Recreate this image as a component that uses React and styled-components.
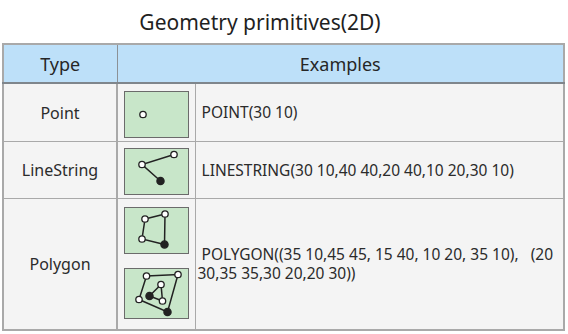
import styled, { createGlobalStyle } from 'styled-components'

const GlobalStyle = createGlobalStyle`
  html, body {
    margin: 0;
    padding: 0;
    background: #ffffff;
  }
  body {
    font-family: "Noto Sans", "Open Sans", "DejaVu Sans", sans-serif;
    color: #262626;
  }
`;

const Page = styled.div`
  width: 568px;
  height: 334px;
  overflow: hidden;
`;

const Title = styled.h1`
  margin: 0;
  width: 520px;
  height: 43px;
  line-height: 44px;
  text-align: center;
  font-size: 21px;
  font-weight: 400;
  color: #1f1f1f;
`;

const Table = styled.table`
  margin-left: 2px;
  width: 563px;
  border-collapse: collapse;
  table-layout: fixed;
  border: 2px solid #a9a9a9;
  background: #f4f4f4;
`;

const HeadCell = styled.th`
  height: 37px;
  padding: 0;
  background: #bde0f9;
  border: 1px solid #8c9196;
  border-bottom: 2px solid #7f868c;
  font-size: 18px;
  font-weight: 400;
  color: #262626;
  text-align: center;
`;

const TypeCell = styled.td`
  height: ${({ $h }) => $h}px;
  padding: 0;
  border: 1px solid #a9a9a9;
  border-right: 2px solid #a9a9a9;
  text-align: center;
  font-size: 16px;
  color: #2b2b2b;
`;

const PicCell = styled.td`
  padding: 0;
  border: 1px solid #a9a9a9;
  vertical-align: middle;
`;

const PicStack = styled.div`
  display: flex;
  flex-direction: column;
  align-items: center;
  gap: 14px;
  padding: ${({ $pad }) => $pad || '0'};
`;

const TextCell = styled.td`
  padding: 0 3px 0 2px;
  border: 1px solid #a9a9a9;
  font-size: 15.5px;
  line-height: 19px;
  color: #2b2b2b;
  white-space: pre-wrap;
  text-align: left;
`;

const Box = styled.svg`
  display: block;
  margin-left: 1px;
`;

const NODE = { r: 3.2, stroke: '#222', strokeWidth: 1.3 };

const Node = ({ x, y, filled }) => (
  <circle cx={x} cy={y} r={filled ? 3.6 : NODE.r} fill={filled ? '#222' : '#fff'} stroke={NODE.stroke} strokeWidth={NODE.strokeWidth} />
);

const Frame = ({ h, children }) => (
  <Box width="65" height={h} viewBox={`0 0 65 ${h}`}>
    <rect x="0.5" y="0.5" width="64" height={h - 1} fill="#c8e6c9" stroke="#6b6b6b" strokeWidth="1" />
    {children}
  </Box>
);

const PointIcon = () => (
  <Frame h={47}>
    <Node x={19} y={23.5} />
  </Frame>
);

const LineIcon = () => (
  <Frame h={47}>
    <polyline points="50,6.5 18,16.5 36.5,33" fill="none" stroke="#222" strokeWidth="1.5" />
    <Node x={50} y={6.5} />
    <Node x={18} y={16.5} />
    <Node x={36.5} y={33} filled />
  </Frame>
);

const PolyIcon = () => (
  <Frame h={47}>
    <polygon points="21,12 41,7 40.5,37.5 18,32" fill="none" stroke="#222" strokeWidth="1.5" />
    <Node x={21} y={12} />
    <Node x={41} y={7} />
    <Node x={18} y={32} />
    <Node x={40.5} y={37.5} filled />
  </Frame>
);

const HoleIcon = () => (
  <Frame h={51}>
    <polygon points="22.5,8 54,6.5 43.5,44 15,31.5" fill="none" stroke="#222" strokeWidth="1.5" />
    <polygon points="37,16.5 25.5,28 38.5,33" fill="none" stroke="#222" strokeWidth="1.5" />
    <Node x={22.5} y={8} />
    <Node x={54} y={6.5} />
    <Node x={15} y={31.5} />
    <Node x={43.5} y={44} filled />
    <Node x={37} y={16.5} />
    <Node x={38.5} y={33} />
    <Node x={25.5} y={28} filled />
  </Frame>
);

const rows = [
  { type: 'Point', h: 57, icons: [PointIcon], text: ' POINT(30 10)', pad: '3px 0 0' },
  { type: 'LineString', h: 56, icons: [LineIcon], text: ' LINESTRING(30 10,40 40,20 40,10 20,30 10)', pad: '2px 0 0' },
  { type: 'Polygon', h: 130, icons: [PolyIcon, HoleIcon], text: ' POLYGON((35 10,45 45, 15 40, 10 20, 35 10),   (20 30,35 35,30 20,20 30))', pad: '0 0 2px' },
];

const App = () => {
  return (
    <Page>
      <GlobalStyle />
      <Title>Geometry primitives(2D)</Title>
      <Table>
        <colgroup>
          <col style={{ width: 114 }} />
          <col style={{ width: 78 }} />
          <col />
        </colgroup>
        <thead>
          <tr>
            <HeadCell>Type</HeadCell>
            <HeadCell colSpan={2}>Examples</HeadCell>
          </tr>
        </thead>
        <tbody>
          {rows.map((row) => (
            <tr key={row.type}>
              <TypeCell $h={row.h}>{row.type}</TypeCell>
              <PicCell>
                <PicStack $pad={row.pad}>
                  {row.icons.map((Icon, i) => <Icon key={i} />)}
                </PicStack>
              </PicCell>
              <TextCell>{row.text}</TextCell>
            </tr>
          ))}
        </tbody>
      </Table>
    </Page>
  )
}

export default App
